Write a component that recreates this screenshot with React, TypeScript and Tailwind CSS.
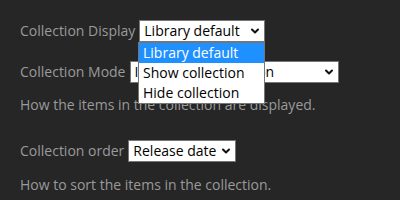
import React from "react"

function Chevron() {
  return (
    <svg width="8" height="6" viewBox="0 0 8 6" className="shrink-0">
      <path d="M1 1.5 L4 4.5 L7 1.5" fill="none" stroke="#111" strokeWidth="2" strokeLinecap="round" strokeLinejoin="round" />
    </svg>
  )
}

function FakeSelect({ value, className }: { value: string; className: string }) {
  return (
    <div
      className={
        "flex h-[22px] items-center justify-between gap-[4px] bg-white border border-[#767676] pl-[4px] pr-[5px] text-[14px] text-black " +
        className
      }
    >
      <span className="whitespace-nowrap overflow-hidden">{value}</span>
      <Chevron />
    </div>
  )
}

const options = ["Library default", "Show collection", "Hide collection"]

export default function App() {
  return (
    <div
      className="w-[400px] h-[200px] bg-[#262626] px-[20px] pt-[20px] text-[14px] leading-[20px] text-[#9a9a9a] overflow-hidden"
      style={{ fontFamily: '"Open Sans", sans-serif' }}
    >
      {/* Collection Display */}
      <div className="relative flex items-center gap-[4px]">
        <span>Collection Display</span>
        <FakeSelect value="Library default" className="w-[126px]" />

        {/* open dropdown */}
        <div className="absolute left-[118px] top-[22px] z-10 w-[127px] bg-white border border-[#767676] text-black">
          {options.map((o, i) => (
            <div
              key={o}
              className={
                "h-[20px] pl-[4px] leading-[20px] whitespace-nowrap " +
                (i === 0 ? "bg-[#1e90ff] text-white" : "")
              }
            >
              {o}
            </div>
          ))}
        </div>
      </div>

      {/* Collection Mode */}
      <div className="mt-[19px] flex items-center gap-[4px]">
        <span>Collection Mode</span>
        <FakeSelect value="Inherit from a season" className="w-[209px]" />
      </div>
      <p className="mt-[12px]">How the items in the collection are displayed.</p>

      {/* Collection order */}
      <div className="mt-[25px] flex items-center gap-[4px]">
        <span>Collection order</span>
        <FakeSelect value="Release date" className="w-[108px]" />
      </div>
      <p className="mt-[13px]">How to sort the items in the collection.</p>
    </div>
  )
}
